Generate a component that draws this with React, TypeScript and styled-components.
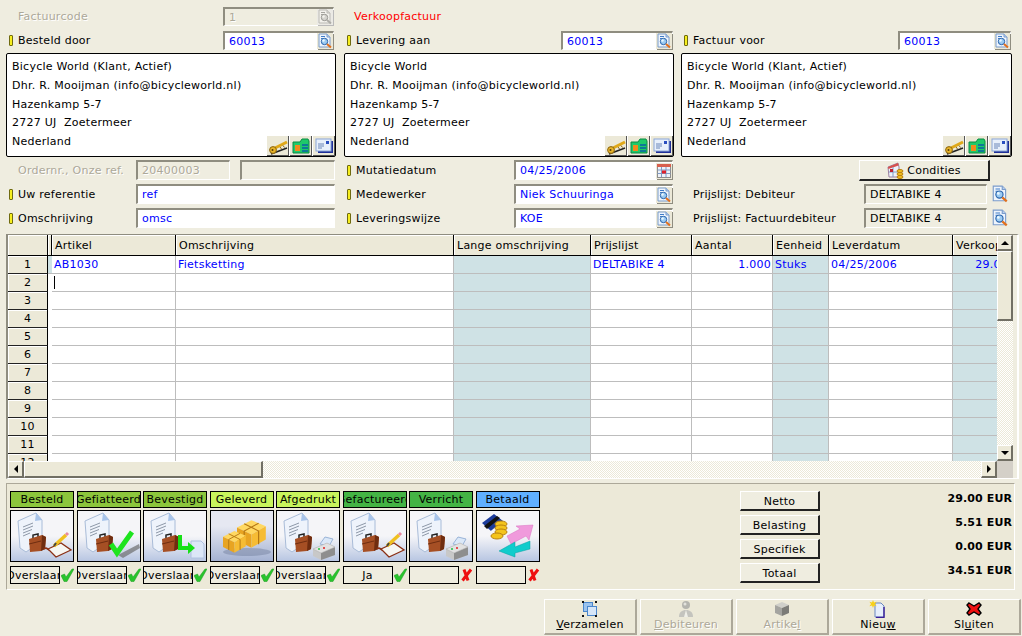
import React from "react";
import styled, { createGlobalStyle } from "styled-components";

const PAGE = "#efede0";
const FACE = "#ece9d8";
const BLUE = "#0000ff";
const MUTED = "#aca899";
const LIGHT_BLUE = "#cfe2e5";

const GlobalStyle = createGlobalStyle`
  html, body {
    margin: 0;
    width: 1022px;
    height: 636px;
    overflow: hidden;
    background: ${PAGE};
  }
  body {
    font-family: "DejaVu Sans", Verdana, sans-serif;
    font-size: 11px;
    letter-spacing: 0.25px;
    color: #000;
  }
`;

/* ---------- icons ---------- */

const LookupIcon = ({ size = 16 }: { size?: number }) => (
  <svg width={size} height={size} viewBox="0 0 16 16">
    <path d="M2 1h8l3 3v10H2z" fill="#eef4fc" stroke="#7b9ccb" />
    <path d="M10 1v3h3" fill="#b8d0ee" stroke="#7b9ccb" />
    <path d="M4 3.500h4M4 5.500h2" stroke="#3f7cc8" />
    <circle cx="7.500" cy="8.500" r="3.200" fill="#9ccbf2" stroke="#2a64ac" />
    <circle cx="6.500" cy="7.500" r="1.200" fill="#eaf8ff" />
    <path d="M10 11l4 3.500" stroke="#e2701c" strokeWidth="2" />
  </svg>
);

const CalendarIcon = () => (
  <svg width="16" height="16" viewBox="0 0 16 16">
    <rect x="1.500" y="1.500" width="13" height="13" fill="#eef1f8" stroke="#8d8d8d" />
    <rect x="1" y="1" width="14" height="3" fill="#d8604e" />
    <path d="M1.500 7h13M1.500 10.500h13M5.500 4v10M10 4v10" stroke="#7f9cc6" />
    <rect x="6" y="7.500" width="4" height="3" fill="#e0202a" />
  </svg>
);

const KeysIcon = () => (
  <svg width="20" height="17" viewBox="0 0 20 17">
    <path d="M3 16l16-6" stroke="#222" strokeWidth="1.600" />
    <path d="M7 10l12-6" stroke="#e0a818" strokeWidth="3" />
    <circle cx="5" cy="12" r="3.400" fill="#e8b428" stroke="#8a6410" />
    <circle cx="4.500" cy="12" r="1" fill="#5a3e08" />
    <path d="M12 9l1.500 2M15 7.500l1.500 2" stroke="#8a6410" />
  </svg>
);

const CardIcon = () => (
  <svg width="18" height="16" viewBox="0 0 18 16">
    <path d="M1 4h7l2-3h6l1 2v12H1z" fill="#1fc96a" stroke="#0c8a42" />
    <rect x="3" y="7" width="5" height="6" fill="#f08a1c" />
    <path d="M10 7h6M10 10h6M10 13h6" stroke="#0a5fa8" strokeWidth="1.500" />
  </svg>
);

const MailIcon = () => (
  <svg width="19" height="16" viewBox="0 0 19 16">
    <rect x="3" y="3" width="15" height="12" fill="#1f2f98" />
    <rect x="1" y="1" width="15" height="12" fill="#e8f0fb" stroke="#8aa6d8" />
    <rect x="11" y="3" width="3" height="3" fill="#2a4fc0" />
    <path d="M3 6h6M3 8h6M3 10h4" stroke="#6a86b8" />
  </svg>
);

const ConditionsIcon = () => (
  <svg width="17" height="17" viewBox="0 0 17 17">
    <path d="M1 5l10-4 1 4v10H2z" fill="#eef1f8" stroke="#9a7fa0" />
    <path d="M1 5l10-4 .6 2.400L1.400 7z" fill="#d8504e" />
    <path d="M2 10h9M6 5v10" stroke="#7f9cc6" />
    <rect x="3" y="7" width="3" height="3" fill="#c02030" />
    <ellipse cx="13" cy="9" rx="3" ry="1.500" fill="#f4c020" stroke="#b88010" />
    <ellipse cx="13" cy="12" rx="3" ry="1.500" fill="#f4c020" stroke="#b88010" />
    <ellipse cx="13" cy="15" rx="3" ry="1.500" fill="#f4c020" stroke="#b88010" />
  </svg>
);

const CheckIcon = () => (
  <svg width="13" height="14" viewBox="0 0 13 14">
    <path d="M0 7.500L3.500 6 5 9l6-8h2L6 13.500H3z" fill="#28c42c" stroke="#1c9c20" strokeWidth=".5" />
  </svg>
);

const CrossIcon = () => (
  <svg width="13" height="14" viewBox="0 0 13 14">
    <path d="M4 1.500l4 11M11 1.500L2.500 12.500" fill="none" stroke="#ee1010" strokeWidth="3" />
  </svg>
);

const CollectIcon = () => (
  <svg width="18" height="18" viewBox="0 0 18 18">
    <rect x="2.500" y="2.500" width="9" height="9" fill="#9cc4ee" stroke="#4a86cc" />
    <rect x="6.500" y="6.500" width="9" height="9" fill="#d6e6f8" stroke="#4a86cc" />
    <path d="M1 1h2v2H1zM14 1h2v2h-2zM1 15h2v2H1zM14 15h2v2h-2z" fill="#111" />
  </svg>
);

const PersonIcon = () => (
  <svg width="18" height="18" viewBox="0 0 18 18">
    <circle cx="9" cy="5" r="4" fill="#b4b4ae" />
    <circle cx="8" cy="4" r="1.500" fill="#e2e2dc" />
    <path d="M2 17c0-5 3-7 7-7s7 2 7 7z" fill="#c4c4be" />
    <path d="M9 10l-2 7h4z" fill="#efefe8" />
  </svg>
);

const CubeIcon = () => (
  <svg width="18" height="18" viewBox="0 0 18 18">
    <path d="M2 5l7-3 7 3-7 3z" fill="#cfcfca" />
    <path d="M2 5l7 3v8l-7-3z" fill="#a4a4a0" />
    <path d="M16 5l-7 3v8l7-3z" fill="#7c7c78" />
  </svg>
);

const NewDocIcon = () => (
  <svg width="18" height="18" viewBox="0 0 18 18">
    <path d="M6 3h6l3 3v11H6z" fill="#e6eefb" stroke="#6a86c0" />
    <path d="M15 7v10.500H7" fill="none" stroke="#3a1f98" strokeWidth="1.400" />
    <path d="M4 0l1 2.400 2.600-.6L6 4l1.600 2.200L5 5.600 4 8 3 5.600l-2.600.6L2 4 .4 1.800 3 2.400z" fill="#f8d018" />
  </svg>
);

const CloseIcon = () => (
  <svg width="18" height="18" viewBox="0 0 18 18">
    <path d="M4 3l5 3 5-3 2 2-3 4 3 4-2 2-5-3-5 3-2-2 3-4-3-4z" fill="#f01010" stroke="#000" strokeWidth="1.400" />
  </svg>
);

/* ---------- status pictures ---------- */

const PaperCase = () => (
  <>
    <path d="M7 10L25 2l6 7v21L15 41l-6-4z" fill="#eef3fb" stroke="#a9bcd8" />
    <path d="M25 2l-1 8 7-1z" fill="#a8c4ea" />
    <path d="M12 16l10-4M12 19l10-4M12 22l9-3.500M12 25l7-3" stroke="#8d98a8" />
    <path d="M22 27v-3l5-1v3" fill="none" stroke="#222" strokeWidth="1.500" />
    <path d="M18 28l13-4 4 2-1 12-4 2-11 1z" fill="#a64f24" />
    <path d="M31 24l4 2-1 12-4 2z" fill="#6f2d10" />
    <path d="M18 33l12-3" stroke="#6f2d10" />
  </>
);

const PenBook = () => (
  <>
    <path d="M33 38c3-3 4 2 6 1" fill="none" stroke="#8a2f14" strokeWidth="1.500" />
    <path d="M37 38l13-6 10 7-15 7z" fill="#f6f6f2" stroke="#8a2f14" strokeWidth="1.300" />
    <path d="M43 35l12-11" stroke="#f0c020" strokeWidth="3.400" />
    <path d="M43 35l2-3" stroke="#444" strokeWidth="2" />
    <path d="M55 24l2-2" stroke="#e88aa0" strokeWidth="3" />
  </>
);

const Printer = () => (
  <>
    <path d="M43 33l5-7 8 2-4 7z" fill="#dbe8f8" stroke="#9ab4d8" />
    <path d="M36 38l14-6 8 4v8l-14 5-8-4z" fill="#c8c8c8" />
    <path d="M44 42l14-6v8l-14 5z" fill="#8e8e8e" />
    <path d="M36 38l14-6 8 4-14 6z" fill="#e2e2e2" stroke="#aaa" strokeWidth=".5" />
    <circle cx="42" cy="38" r="1" fill="#20c040" />
    <circle cx="47" cy="37" r="1" fill="#e02020" />
  </>
);

const Box = ({ x, y, s }: { x: number; y: number; s: number }) => (
  <g transform={`translate(${x} ${y}) scale(${s})`}>
    <path d="M0 7l12-6 12 5-12 7z" fill="#ffd862" />
    <path d="M0 7l12 6v11L0 18z" fill="#e8a422" />
    <path d="M24 6l-12 7v11l12-7z" fill="#f6bc34" />
    <path d="M6 4l12 6v11M18 3.500L6 10v11" fill="none" stroke="#b57814" />
  </g>
);

const ArtOrder = () => (
  <>
    <PaperCase />
    <PenBook />
  </>
);

const ArtApproved = () => (
  <>
    <PaperCase />
    <path d="M40 44l21-11 1 4-17 10z" fill="#666" opacity=".65" />
    <path d="M33 33l6 9 15-21" fill="none" stroke="#1ee41e" strokeWidth="5" />
  </>
);

const ArtConfirmed = () => (
  <>
    <PaperCase />
    <path d="M47 30h10l3 3v14H47z" fill="#dce7f7" stroke="#b0c2e0" />
    <path d="M36 24v13h9" fill="none" stroke="#16e016" strokeWidth="4" />
    <path d="M44 31l7 6-7 6z" fill="#16e016" />
  </>
);

const ArtDelivered = () => (
  <>
    <ellipse cx="36" cy="41" rx="24" ry="4" fill="#6e7c9c" opacity=".45" />
    <Box x={26} y={8} s={1.2} />
    <Box x={12} y={19} s={0.95} />
  </>
);

const ArtPrinted = () => (
  <>
    <PaperCase />
    <Printer />
  </>
);

const ArtPaid = () => (
  <>
    <path d="M5 12L17 3l9 7-12 10z" fill="#1c3c9c" />
    <path d="M7 15L20 5l3 2L10 18z" fill="#111" />
    <path d="M14 20l12-10 1 3-12 11z" fill="#f4f6fa" />
    <ellipse cx="24" cy="13" rx="6" ry="3" fill="#f4c41c" stroke="#b88210" />
    <ellipse cx="24" cy="17" rx="6" ry="3" fill="#f4c41c" stroke="#b88210" />
    <ellipse cx="24" cy="21" rx="6" ry="3" fill="#f4c41c" stroke="#b88210" />
    <ellipse cx="20" cy="25" rx="6" ry="3" fill="#f4c41c" stroke="#b88210" />
    <path d="M30 25l13-7-4-3 17-1-4 15-3-4-15 8z" fill="#f09adc" stroke="#d870c0" strokeWidth=".5" />
    <path d="M53 30L38 36v-5l-16 9 16 6v-4l15-4z" fill="#10cccc" stroke="#08a0a0" strokeWidth=".5" />
  </>
);

/* ---------- data ---------- */

const addresses = ["Bicycle World (Klant, Actief)", "Bicycle World", "Bicycle World (Klant, Actief)"].map((first) => [
  first,
  "Dhr. R. Mooijman (info@bicycleworld.nl)",
  "Hazenkamp 5-7",
  "2727 UJ\u00a0\u00a0Zoetermeer",
  "Nederland",
]);

const columns = [
  { title: "Artikel", width: 124 },
  { title: "Omschrijving", width: 278 },
  { title: "Lange omschrijving", width: 137, tinted: true },
  { title: "Prijslijst", width: 101 },
  { title: "Aantal", width: 81, right: true },
  { title: "Eenheid", width: 56, tinted: true },
  { title: "Leverdatum", width: 124 },
  { title: "Verkoopprijs", width: 57, tinted: true, right: true },
];

const firstRow = ["AB1030", "Fietsketting", "", "DELTABIKE 4", "1.000", "Stuks", "04/25/2006", "29.00"];

const statuses = [
  { label: "Besteld", color: "#8cc63c", art: <ArtOrder />, combo: "Overslaan", ok: true },
  { label: "Gefiatteerd", color: "#8cc63c", art: <ArtApproved />, combo: "Overslaan", ok: true },
  { label: "Bevestigd", color: "#8cc63c", art: <ArtConfirmed />, combo: "Overslaan", ok: true },
  { label: "Geleverd", color: "#c8f45c", art: <ArtDelivered />, combo: "Overslaan", ok: true, dark: true },
  { label: "Afgedrukt", color: "#c8f45c", art: <ArtPrinted />, combo: "Overslaan", ok: true },
  { label: "Gefactureerd", color: "#44b444", art: <ArtOrder />, combo: "Ja", ok: true },
  { label: "Verricht", color: "#44b444", art: <ArtPrinted />, combo: "", ok: false },
  { label: "Betaald", color: "#60b0ff", art: <ArtPaid />, combo: "", ok: false },
];

const totals = [
  { name: "Netto", value: "29.00 EUR" },
  { name: "Belasting", value: "5.51 EUR" },
  { name: "Specifiek", value: "0.00 EUR" },
  { name: "Totaal", value: "34.51 EUR" },
];

/* ---------- page ---------- */

const Page = styled.div`
  width: 1022px;
  height: 636px;
  display: flex;
  flex-direction: column;
  padding-left: 6px;
  box-sizing: border-box;
`;

const Form = styled.div`
  display: grid;
  grid-template-columns: 338px 337px 331px;
  padding-top: 7px;
  height: 234px;
  box-sizing: border-box;
`;

const Column = styled.div<{ $pad: number }>`
  padding-right: ${(p) => p.$pad}px;
  display: flex;
  flex-direction: column;
`;

const Row = styled.div<{ $tall?: boolean }>`
  display: flex;
  align-items: center;
  height: ${(p) => (p.$tall ? 20 : 19)}px;
  margin-bottom: ${(p) => (p.$tall ? 4 : 5)}px;
`;

const Label = styled.div<{ $width: number; $plain?: boolean; $off?: boolean }>`
  flex: none;
  width: ${(p) => p.$width}px;
  padding-left: ${(p) => (p.$plain ? 12 : 3)}px;
  box-sizing: border-box;
  display: flex;
  align-items: center;
  white-space: nowrap;
  color: ${(p) => (p.$off ? MUTED : "#000")};
  text-shadow: ${(p) => (p.$off ? "1px 1px #fff" : "none")};
`;

const Marker = styled.span`
  width: 2px;
  height: 9px;
  margin-right: 5px;
  background: #f6ee1e;
  border: 1px solid #6f6a10;
  border-radius: 1px;
`;

const RedTitle = styled.div`
  color: #ff0000;
  padding-left: 10px;
  line-height: 19px;
`;

const Field = styled.div<{ $width: number; $off?: boolean; $plain?: boolean; $gap?: number }>`
  flex: none;
  width: ${(p) => p.$width}px;
  height: 100%;
  box-sizing: border-box;
  margin-left: ${(p) => p.$gap ?? 0}px;
  padding-left: 4px;
  display: flex;
  align-items: center;
  justify-content: space-between;
  border-style: solid;
  border-width: 2px 1px 1px 2px;
  border-color: #8f8d80 #fff #fff #8f8d80;
  background: ${(p) => (p.$off || p.$plain ? "transparent" : "#fff")};
  color: ${(p) => (p.$off ? MUTED : p.$plain ? "#000" : BLUE)};
  text-shadow: ${(p) => (p.$off ? "1px 1px #fff" : "none")};
  white-space: nowrap;
`;

const Lookup = styled.span<{ $off?: boolean }>`
  flex: none;
  width: 16px;
  height: 16px;
  display: flex;
  filter: ${(p) => (p.$off ? "grayscale(1) opacity(.6)" : "none")};
  box-shadow: 1px 1px #8f8d80;
  background: ${FACE};
`;

const SideLookup = styled.span`
  flex: none;
  display: flex;
  margin-left: 4px;
`;

const AddressBox = styled.div`
  position: relative;
  height: 104px;
  margin: -2px 0 3px;
  padding: 4px 0 0 5px;
  box-sizing: border-box;
  background: #fff;
  border: 1px solid #000;
  border-radius: 2px;
  line-height: 18.75px;
  white-space: nowrap;
`;

const AddressTools = styled.div`
  position: absolute;
  right: 0;
  bottom: 0;
  display: flex;
  gap: 1px;
`;

const ToolButton = styled.span`
  width: 22px;
  height: 20px;
  display: flex;
  align-items: center;
  justify-content: center;
  background: ${FACE};
  box-shadow: inset -1px -1px #555;
`;

const RaisedButton = styled.div<{ $width: number; $height: number; $left?: number }>`
  width: ${(p) => p.$width}px;
  height: ${(p) => p.$height}px;
  margin-left: ${(p) => p.$left ?? 0}px;
  padding-top: 1px;
  box-sizing: border-box;
  display: flex;
  align-items: center;
  justify-content: center;
  gap: 3px;
  background: ${PAGE};
  border-style: solid;
  border-width: 1px 2px 2px 1px;
  border-color: #fff #222 #222 #fff;
`;

/* ---------- data grid ---------- */

const GridFrame = styled.div`
  width: 1009px;
  display: grid;
  grid-template-columns: 989px 16px;
  grid-template-rows: 226px 17px;
  border-style: solid;
  border-width: 1px 2px 1px 2px;
  border-color: #8f8d80 #fff #fff #8f8d80;
`;

const TableClip = styled.div`
  overflow: hidden;
  background: #fff;
`;

const Table = styled.table`
  table-layout: fixed;
  border-collapse: separate;
  border-spacing: 0;
  width: 1002px;
  font-size: 11px;
  letter-spacing: 0.25px;
`;

const HeadCell = styled.th`
  height: 21px;
  padding: 0 0 0 3px;
  box-sizing: border-box;
  font-weight: normal;
  text-align: left;
  white-space: nowrap;
  overflow: hidden;
  background: ${FACE};
  border-right: 1px solid #000;
  border-bottom: 1px solid #000;
  box-shadow: inset 1px 1px #fff;
`;

const RowHead = styled.th`
  height: 18px;
  padding: 0;
  box-sizing: border-box;
  font-weight: normal;
  text-align: center;
  background: ${FACE};
  border-right: 1px solid #000;
  border-bottom: 1px solid #222;
  box-shadow: inset 1px 1px #fff;
`;

const Indicator = styled.td<{ $tinted?: boolean }>`
  padding: 0;
  background: ${(p) => (p.$tinted ? LIGHT_BLUE : "#fff")};
  border-bottom: 1px solid ${(p) => (p.$tinted ? "#bdbdbd" : "#fff")};
`;

const Cell = styled.td<{ $tinted?: boolean; $right?: boolean }>`
  height: 18px;
  padding: 0 1px 0 2px;
  box-sizing: border-box;
  color: ${BLUE};
  white-space: nowrap;
  overflow: hidden;
  text-align: ${(p) => (p.$right ? "right" : "left")};
  background: ${(p) => (p.$tinted ? LIGHT_BLUE : "#fff")};
  border-right: 1px solid #bdbdbd;
  border-bottom: 1px solid #bdbdbd;
`;

const Caret = styled.span`
  display: inline-block;
  width: 1px;
  height: 13px;
  background: #000;
  vertical-align: middle;
`;

const Track = styled.div<{ $vertical?: boolean }>`
  display: flex;
  flex-direction: ${(p) => (p.$vertical ? "column" : "row")};
  background: repeating-conic-gradient(${FACE} 0 25%, #fff 0 50%) 0 0 / 2px 2px;
`;

const ScrollPart = styled.div<{ $size?: number; $vertical?: boolean }>`
  flex: none;
  ${(p) => (p.$vertical ? `height: ${p.$size ?? 16}px;` : `width: ${p.$size ?? 16}px;`)}
  box-sizing: border-box;
  display: flex;
  align-items: center;
  justify-content: center;
  background: ${FACE};
  border-style: solid;
  border-width: 1px 2px 2px 1px;
  border-color: #fff #716f64 #716f64 #fff;
`;

const Gap = styled.div`
  flex: 1;
`;

const Arrow = styled.span<{ $dir: "up" | "down" | "left" | "right" }>`
  width: 0;
  height: 0;
  border: 4px solid transparent;
  ${(p) => {
    if (p.$dir === "up") return "border-bottom-color: #000; border-top-width: 0;";
    if (p.$dir === "down") return "border-top-color: #000; border-bottom-width: 0;";
    if (p.$dir === "left") return "border-right-color: #000; border-left-width: 0;";
    return "border-left-color: #000; border-right-width: 0;";
  }}
`;

const Corner = styled.div`
  background: #d4d0c8;
`;

/* ---------- status panel ---------- */

const Panel = styled.div`
  width: 1009px;
  height: 107px;
  margin-top: 4px;
  box-sizing: border-box;
  padding: 7px 2px 0 3px;
  display: flex;
  background: ${FACE};
  border-style: solid;
  border-width: 1px;
  border-color: #aca899 #fff #fff #aca899;
`;

const StatusStrip = styled.div`
  display: flex;
  gap: 2.5px;
  flex: none;
  width: 530px;
`;

const StatusColumn = styled.div`
  width: 64px;
  flex: none;
  display: flex;
  flex-direction: column;
`;

const StatusLabel = styled.div<{ $color: string }>`
  height: 17px;
  box-sizing: border-box;
  border: 1px solid #000;
  background: ${(p) => p.$color};
  display: flex;
  justify-content: center;
  align-items: center;
  white-space: nowrap;
  overflow: hidden;
  line-height: 15px;
`;

const StatusImage = styled.div<{ $dark?: boolean }>`
  height: 52px;
  margin-top: 2px;
  box-sizing: border-box;
  border: 1px solid #000;
  background: ${(p) =>
    p.$dark
      ? "linear-gradient(#e6e8f2 30%, #a4b2d2 100%)"
      : "linear-gradient(#f5f5f8 50%, #b8c6e2 100%)"};
  svg {
    display: block;
  }
`;

const StatusFoot = styled.div`
  margin-top: 4px;
  display: flex;
  align-items: center;
  justify-content: space-between;
`;

const Combo = styled.div`
  width: 50px;
  height: 18px;
  box-sizing: border-box;
  border: 1px solid #000;
  background: ${PAGE};
  display: flex;
  justify-content: center;
  align-items: center;
  white-space: nowrap;
  overflow: hidden;
`;

const TotalButtons = styled.div`
  flex: none;
  margin-left: 200px;
  width: 80px;
  display: flex;
  flex-direction: column;
  gap: 4px;
`;

const TotalValues = styled.div`
  flex: 1;
  margin-top: -4px;
  text-align: right;
  font-weight: bold;
  letter-spacing: 0.1px;
  line-height: 24px;
  white-space: nowrap;
`;

/* ---------- footer ---------- */

const Footer = styled.div`
  margin-top: 9px;
  display: flex;
  justify-content: flex-end;
  gap: 3px;
  padding-right: 1px;
`;

const FooterButton = styled.div<{ $off?: boolean }>`
  width: 93px;
  height: 36px;
  box-sizing: border-box;
  display: flex;
  flex-direction: column;
  align-items: center;
  background: ${FACE};
  border-style: solid;
  border-width: 1px 2px 2px 1px;
  border-color: #fff #aca899 #aca899 #fff;
  color: ${(p) => (p.$off ? MUTED : "#000")};
  text-shadow: ${(p) => (p.$off ? "1px 1px #fff" : "none")};
  line-height: 14px;
  svg {
    display: block;
  }
`;

const Tools = () => (
  <AddressTools>
    <ToolButton><KeysIcon /></ToolButton>
    <ToolButton><CardIcon /></ToolButton>
    <ToolButton><MailIcon /></ToolButton>
  </AddressTools>
);

export default function App() {
  return (
    <Page>
      <GlobalStyle />
      <Form>
        <Column $pad={8}>
          <Row>
            <Label $width={217} $plain $off>Factuurcode</Label>
            <Field $width={111} $off>1<Lookup $off><LookupIcon /></Lookup></Field>
          </Row>
          <Row>
            <Label $width={217}><Marker />Besteld door</Label>
            <Field $width={111}>60013<Lookup><LookupIcon /></Lookup></Field>
          </Row>
          <AddressBox>
            {addresses[0].map((line) => <div key={line}>{line}</div>)}
            <Tools />
          </AddressBox>
          <Row $tall>
            <Label $width={130} $plain $off>Ordernr., Onze ref.</Label>
            <Field $width={94} $off>20400003</Field>
            <Field $width={95} $off $gap={10} />
          </Row>
          <Row $tall>
            <Label $width={130}><Marker />Uw referentie</Label>
            <Field $width={199}>ref</Field>
          </Row>
          <Row $tall>
            <Label $width={130}><Marker />Omschrijving</Label>
            <Field $width={199}>omsc</Field>
          </Row>
        </Column>

        <Column $pad={7}>
          <Row><RedTitle>Verkoopfactuur</RedTitle></Row>
          <Row>
            <Label $width={217}><Marker />Levering aan</Label>
            <Field $width={112}>60013<Lookup><LookupIcon /></Lookup></Field>
          </Row>
          <AddressBox>
            {addresses[1].map((line) => <div key={line}>{line}</div>)}
            <Tools />
          </AddressBox>
          <Row $tall>
            <Label $width={170}><Marker />Mutatiedatum</Label>
            <Field $width={159}>04/25/2006<Lookup><CalendarIcon /></Lookup></Field>
          </Row>
          <Row $tall>
            <Label $width={170}><Marker />Medewerker</Label>
            <Field $width={159}>Niek Schuuringa<Lookup><LookupIcon /></Lookup></Field>
          </Row>
          <Row $tall>
            <Label $width={170}><Marker />Leveringswijze</Label>
            <Field $width={159}>KOE<Lookup><LookupIcon /></Lookup></Field>
          </Row>
        </Column>

        <Column $pad={0}>
          <Row />
          <Row>
            <Label $width={217}><Marker />Factuur voor</Label>
            <Field $width={113}>60013<Lookup><LookupIcon /></Lookup></Field>
          </Row>
          <AddressBox>
            {addresses[2].map((line) => <div key={line}>{line}</div>)}
            <Tools />
          </AddressBox>
          <Row $tall>
            <RaisedButton $width={131} $height={21} $left={178}><ConditionsIcon />Condities</RaisedButton>
          </Row>
          <Row $tall>
            <Label $width={183} $plain>Prijslijst: Debiteur</Label>
            <Field $width={123} $plain>DELTABIKE 4</Field>
            <SideLookup><LookupIcon size={18} /></SideLookup>
          </Row>
          <Row $tall>
            <Label $width={183} $plain>Prijslijst: Factuurdebiteur</Label>
            <Field $width={123} $plain>DELTABIKE 4</Field>
            <SideLookup><LookupIcon size={18} /></SideLookup>
          </Row>
        </Column>
      </Form>

      <GridFrame>
        <TableClip>
          <Table>
            <colgroup>
              <col width={40} />
              <col width={4} />
              {columns.map((c) => <col key={c.title} width={c.width} />)}
            </colgroup>
            <thead>
              <tr>
                <HeadCell />
                <HeadCell />
                {columns.map((c) => <HeadCell key={c.title}>{c.title}</HeadCell>)}
              </tr>
            </thead>
            <tbody>
              {Array.from({ length: 12 }, (_, i) => (
                <tr key={i}>
                  <RowHead>{i + 1}</RowHead>
                  <Indicator $tinted={i === 0} />
                  {columns.map((c, j) => (
                    <Cell key={c.title} $tinted={c.tinted} $right={c.right}>
                      {i === 0 ? firstRow[j] : null}
                      {i === 1 && j === 0 ? <Caret /> : null}
                    </Cell>
                  ))}
                </tr>
              ))}
            </tbody>
          </Table>
        </TableClip>
        <Track $vertical>
          <ScrollPart $vertical><Arrow $dir="up" /></ScrollPart>
          <ScrollPart $vertical $size={70} />
          <Gap />
          <ScrollPart $vertical><Arrow $dir="down" /></ScrollPart>
        </Track>
        <Track>
          <ScrollPart><Arrow $dir="left" /></ScrollPart>
          <ScrollPart $size={239} />
          <Gap />
          <ScrollPart><Arrow $dir="right" /></ScrollPart>
        </Track>
        <Corner />
      </GridFrame>

      <Panel>
        <StatusStrip>
          {statuses.map((s) => (
            <StatusColumn key={s.label}>
              <StatusLabel $color={s.color}>{s.label}</StatusLabel>
              <StatusImage $dark={s.dark}>
                <svg width="62" height="50" viewBox="0 0 62 50">{s.art}</svg>
              </StatusImage>
              <StatusFoot>
                <Combo>{s.combo}</Combo>
                {s.ok ? <CheckIcon /> : <CrossIcon />}
              </StatusFoot>
            </StatusColumn>
          ))}
        </StatusStrip>
        <TotalButtons>
          {totals.map((t) => (
            <RaisedButton key={t.name} $width={80} $height={20}>{t.name}</RaisedButton>
          ))}
        </TotalButtons>
        <TotalValues>
          {totals.map((t) => <div key={t.name}>{t.value}</div>)}
        </TotalValues>
      </Panel>

      <Footer>
        <FooterButton><CollectIcon /><span><u>V</u>erzamelen</span></FooterButton>
        <FooterButton $off><PersonIcon /><span><u>D</u>ebiteuren</span></FooterButton>
        <FooterButton $off><CubeIcon /><span>Artike<u>l</u></span></FooterButton>
        <FooterButton><NewDocIcon /><span>Nieu<u>w</u></span></FooterButton>
        <FooterButton><CloseIcon /><span>Sl<u>u</u>iten</span></FooterButton>
      </Footer>
    </Page>
  );
}
